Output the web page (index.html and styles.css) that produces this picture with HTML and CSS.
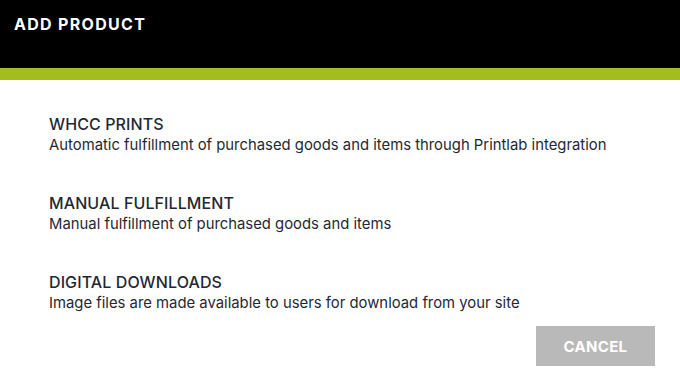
FILE: index.html
```html
<!DOCTYPE html>
<html>
<head>
<meta charset="utf-8">
<link rel="stylesheet" href="styles.css">
</head>
<body>
<div class="modal">
  <header class="header">
    <h1 class="title">ADD PRODUCT</h1>
  </header>
  <div class="accent"></div>
  <main class="content">
    <div class="option">
      <h2 class="opt-title">WHCC PRINTS</h2>
      <p class="opt-desc">Automatic fulfillment of purchased goods and items through Printlab integration</p>
    </div>
    <div class="option">
      <h2 class="opt-title">MANUAL FULFILLMENT</h2>
      <p class="opt-desc">Manual fulfillment of purchased goods and items</p>
    </div>
    <div class="option">
      <h2 class="opt-title">DIGITAL DOWNLOADS</h2>
      <p class="opt-desc">Image files are made available to users for download from your site</p>
    </div>
  </main>
  <footer class="footer">
    <button class="cancel">CANCEL</button>
  </footer>
</div>
</body>
</html>
```
FILE: styles.css
```css
html, body {
  margin: 0;
  padding: 0;
  background: #ffffff;
}
body {
  font-family: Inter, "Noto Sans", sans-serif;
  width: 680px;
  height: 380px;
  overflow: hidden;
}
.header {
  background: #000000;
  height: 68px;
  box-sizing: border-box;
  padding: 14px 14px 0;
}
.title {
  margin: 0;
  color: #ffffff;
  font-size: 16px;
  font-weight: 700;
  letter-spacing: 1.3px;
  line-height: 20px;
}
.accent {
  height: 12px;
  background: #a2bd1d;
}
.content {
  padding: 34px 49px 0;
  display: flex;
  flex-direction: column;
  gap: 38px;
}
.option {
  display: flex;
  flex-direction: column;
  gap: 1px;
}
.opt-title {
  margin: 0;
  font-size: 16px;
  font-weight: 500;
  color: #1f2933;
  line-height: 20px;
  letter-spacing: 0.1px;
}
.opt-desc {
  margin: 0;
  font-size: 14.85px;
  font-weight: 400;
  color: #1f2933;
  line-height: 20px;
}
.footer {
  display: flex;
  justify-content: flex-end;
  padding: 13px 25px 0 0;
}
.cancel {
  width: 119px;
  height: 40px;
  border: none;
  background: #b9b9b9;
  color: #ffffff;
  font-family: Inter, "Noto Sans", sans-serif;
  font-size: 15px;
  font-weight: 700;
  letter-spacing: 0.3px;
}
```
